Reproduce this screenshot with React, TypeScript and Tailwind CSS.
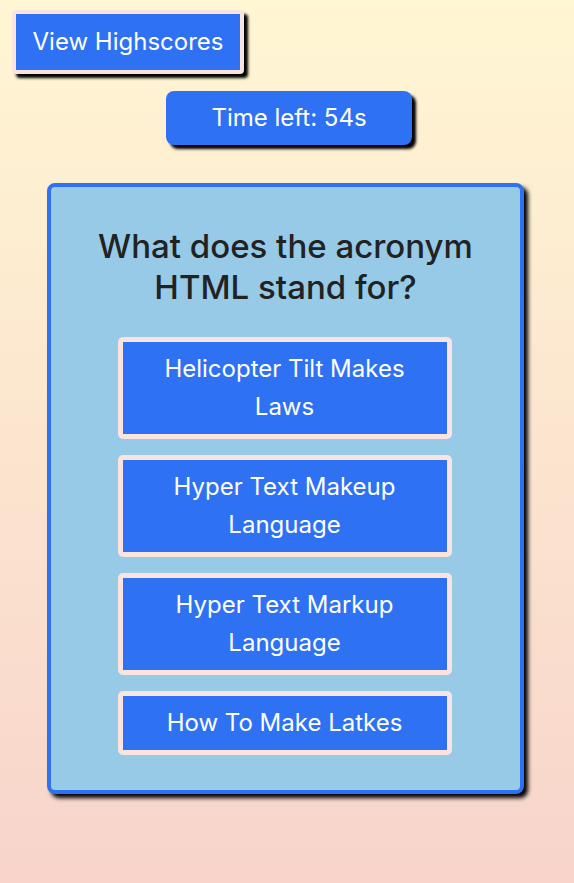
import React from "react";

const answers = [
  "Helicopter Tilt Makes Laws",
  "Hyper Text Makeup Language",
  "Hyper Text Markup Language",
  "How To Make Latkes",
];

export default function App() {
  return (
    <div
      className="min-h-screen w-full bg-gradient-to-b from-[#fff6d3] to-[#f8d4cb] pt-[10px] pb-10"
      style={{ fontFamily: "Inter, 'Noto Sans', sans-serif" }}
    >
      <div className="pl-[12px]">
        <button className="h-[64px] w-[232px] rounded-[4px] border-4 border-[#fbe3e0] bg-[#2e72f3] text-[24px] text-white shadow-[4px_4px_3px_#000]">
          View Highscores
        </button>
      </div>
      <div className="ml-[166px] mt-[17px] flex h-[54px] w-[246px] items-center justify-center rounded-lg bg-[#2e72f3] text-[24px] text-white shadow-[4px_4px_3px_#000]">
        Time left: 54s
      </div>
      <div className="ml-[47px] mt-[38px] w-[477px] rounded-lg border-4 border-[#2e72f3] bg-[#96cae6] pb-[35px] pt-[39px] shadow-[4px_4px_4px_#000]">
        <h1 className="mx-auto w-[400px] text-center text-[33px] font-medium leading-[41px] text-[#222]">
          What does the acronym HTML stand for?
        </h1>
        <div className="mt-[29px] flex flex-col items-center gap-[16px] pr-[2px]">
          {answers.map((a) => (
            <button
              key={a}
              className="w-[334px] rounded-[5px] border-[5px] border-[#fbe3e0] bg-[#2e72f3] px-[40px] py-2 text-[24px] leading-[38px] text-white"
            >
              {a}
            </button>
          ))}
        </div>
      </div>
    </div>
  );
}
